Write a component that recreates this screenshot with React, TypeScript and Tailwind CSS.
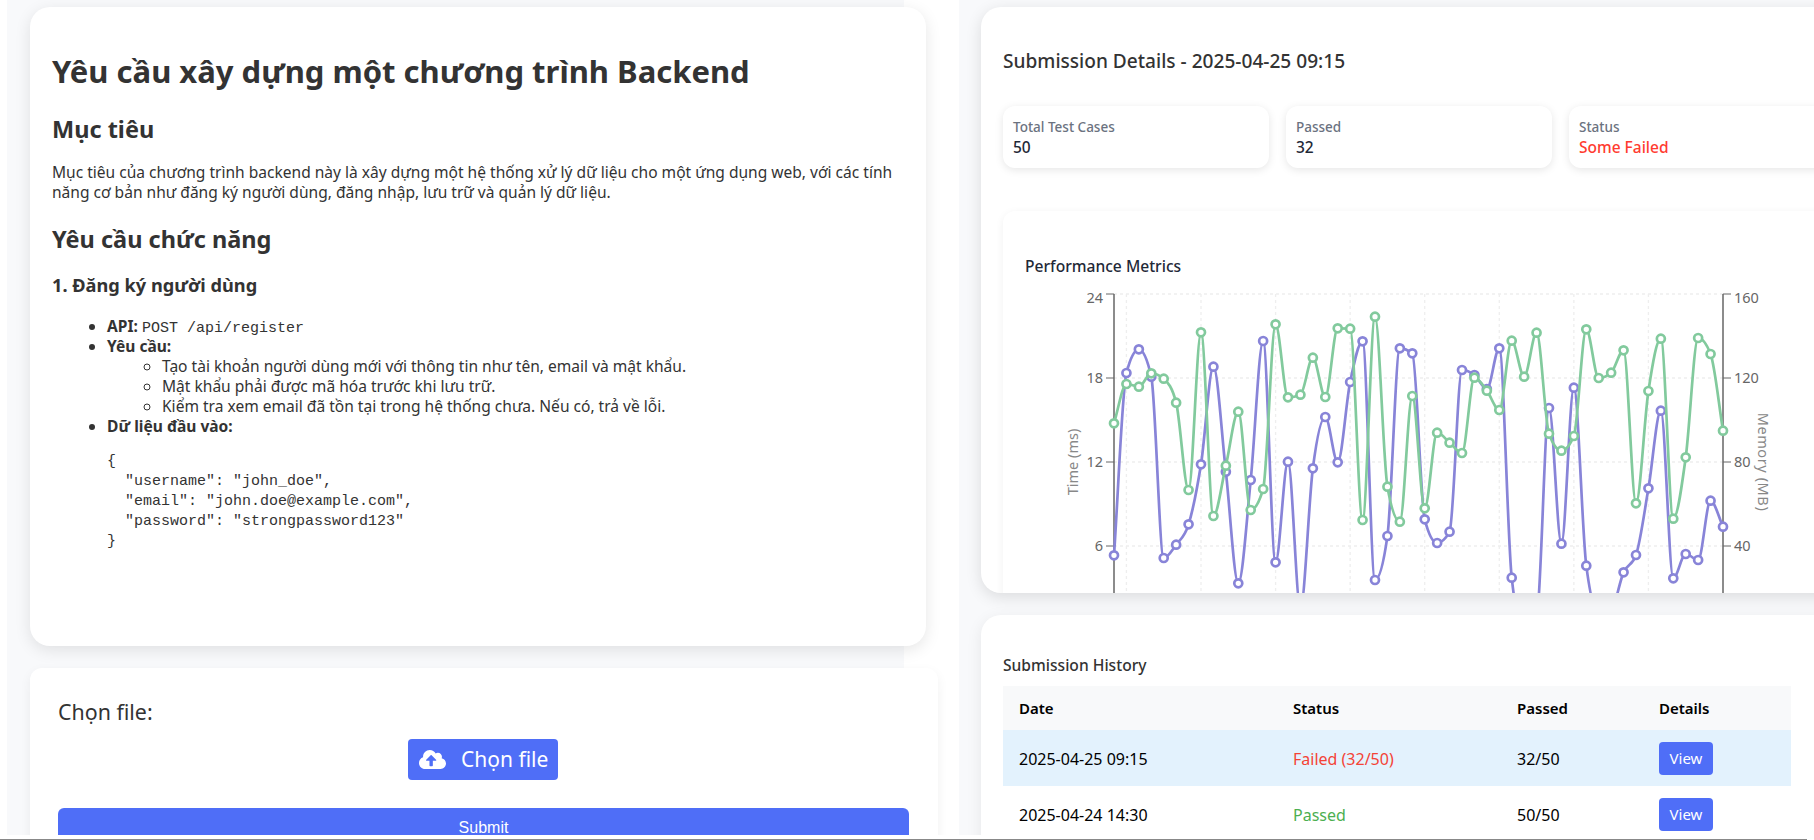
import { FaCloudUploadAlt } from "react-icons/fa";

// y positions of the chart points, measured in svg pixels x 3
const timeY = [
  826, 279, 208, 290, 834, 794, 733, 553, 260, 575, 910, 600, 183, 847, 545, 985, 565, 411, 547, 306, 184, 900, 768, 205,
  220, 718, 789, 755, 270, 285, 327, 205, 893, 1060, 1020, 384, 791, 323, 857, 1000, 990, 877, 825, 625, 392, 895, 822,
  840, 662, 740,
];
const memoryY = [
  430, 312, 320, 280, 296, 368, 630, 157, 708, 557, 395, 690, 627, 133, 352, 344, 233, 351, 145, 146, 720, 110, 620, 725,
  348, 685, 458, 488, 519, 293, 332, 390, 182, 290, 158, 461, 512, 468, 148, 294, 278, 211, 670, 333, 176, 716, 532, 174,
  222, 452,
];

const LEFT = 89;
const RIGHT = 698;
const TOP = 10;
const STEP = (RIGHT - LEFT) / 49;

function toPoints(values: number[]) {
  return values.map((v, i) => ({ x: LEFT + STEP * i, y: v / 3 - 4 }));
}

// same curve as d3 curveMonotoneX
function monotonePath(pts: { x: number; y: number }[]) {
  const n = pts.length;
  const slopes: number[] = [];
  for (let i = 0; i < n - 1; i++) slopes.push((pts[i + 1].y - pts[i].y) / (pts[i + 1].x - pts[i].x));
  const tangents = pts.map((_, i) => {
    if (i === 0) return slopes[0];
    if (i === n - 1) return slopes[n - 2];
    const a = slopes[i - 1];
    const b = slopes[i];
    if (a * b <= 0) return 0;
    return Math.sign(a) * Math.min(Math.abs(a) * 2, Math.abs(b) * 2, Math.abs((a + b) / 2));
  });
  let d = `M${pts[0].x},${pts[0].y}`;
  for (let i = 0; i < n - 1; i++) {
    const dx = (pts[i + 1].x - pts[i].x) / 3;
    d += `C${pts[i].x + dx},${pts[i].y + dx * tangents[i]} ${pts[i + 1].x - dx},${pts[i + 1].y - dx * tangents[i + 1]} ${pts[i + 1].x},${pts[i + 1].y}`;
  }
  return d;
}

function Series({ values, color }: { values: number[]; color: string }) {
  const pts = toPoints(values);
  return (
    <g>
      <path d={monotonePath(pts)} fill="none" stroke={color} strokeWidth={2.7} />
      {pts.map((p, i) => (
        <circle key={i} cx={p.x} cy={p.y} r={4} fill="#fff" stroke={color} strokeWidth={2.7} />
      ))}
    </g>
  );
}

function PerformanceChart() {
  const rows = [
    { y: TOP, left: "24", right: "160" },
    { y: TOP + 84, left: "18", right: "120" },
    { y: TOP + 168, left: "12", right: "80" },
    { y: TOP + 252, left: "6", right: "40" },
  ];
  const verticals = [1, 7, 13, 19, 25, 31, 37, 43];
  return (
    <svg width={780} height={340} className="mt-[6px] block text-[14.5px]">
      {rows.map((r) => (
        <line key={r.y} x1={LEFT} x2={RIGHT} y1={r.y} y2={r.y} stroke="#eeeeee" strokeDasharray="3 3" strokeWidth={1.3} />
      ))}
      {verticals.map((i) => (
        <line key={i} x1={LEFT + STEP * i} x2={LEFT + STEP * i} y1={TOP} y2={340} stroke="#eeeeee" strokeDasharray="3 3" strokeWidth={1.3} />
      ))}
      <line x1={LEFT} x2={LEFT} y1={TOP} y2={340} stroke="#666" strokeWidth={1.5} />
      <line x1={RIGHT} x2={RIGHT} y1={TOP} y2={340} stroke="#666" strokeWidth={1.5} />
      {rows.map((r, i) => (
        <g key={r.y} fill="#666">
          <line x1={LEFT - 8} x2={LEFT} y1={r.y} y2={r.y} stroke="#666" />
          <line x1={RIGHT} x2={RIGHT + 8} y1={r.y} y2={r.y} stroke="#666" />
          <text x={LEFT - 11} y={r.y + (i === 0 ? 9 : 5)} textAnchor="end">
            {r.left}
          </text>
          <text x={RIGHT + 11} y={r.y + (i === 0 ? 9 : 5)}>{r.right}</text>
        </g>
      ))}
      <text x={48} y={178} textAnchor="middle" fill="#888" transform="rotate(-90 48 178)" dy={5}>
        Time (ms)
      </text>
      <text x={738} y={178} textAnchor="middle" fill="#888" transform="rotate(90 738 178)" dy={5} letterSpacing={0.6}>
        Memory (MB)
      </text>
      <Series values={timeY} color="#8884d8" />
      <Series values={memoryY} color="#82ca9d" />
    </svg>
  );
}

function StatCard({ label, value, valueClass }: { label: string; value: string; valueClass: string }) {
  return (
    <div className="h-[62px] rounded-xl bg-white pl-[10px] pt-[11px] shadow-[0_2px_8px_rgba(0,0,0,0.1)]">
      <div className="text-[13.5px] leading-[20px] font-medium text-[#6b7280]">{label}</div>
      <div className={`text-[15.5px] leading-[21px] font-medium ${valueClass}`}>{value}</div>
    </div>
  );
}

const history = [
  { date: "2025-04-25 09:15", status: "Failed (32/50)", statusClass: "text-[#f44336]", passed: "32/50", rowClass: "bg-[#e3f2fd]" },
  { date: "2025-04-24 14:30", status: "Passed", statusClass: "text-[#4caf50]", passed: "50/50", rowClass: "" },
];

export default function App() {
  return (
    <div className="h-[840px] w-[1814px] overflow-hidden bg-white font-['Noto_Sans',sans-serif] text-[#333]">
      <div className="flex h-[835px] overflow-hidden">
        {/* Left column */}
        <div className="ml-[7px] h-full w-[897px] shrink-0 bg-[#f8f9fb] pl-[23px] pt-[7px]">
          <div className="h-[639px] w-[896px] rounded-[20px] bg-white pl-[22px] pt-[42px] shadow-[0_4px_16px_rgba(0,0,0,0.1)]">
            <h1 className="text-[31px] leading-[44px] font-bold">Yêu cầu xây dựng một chương trình Backend</h1>
            <h2 className="mt-[20px] text-[23.5px] leading-[32px] font-bold">Mục tiêu</h2>
            <p className="mt-[17px] w-[850px] text-[15.55px] leading-[20px]">
              Mục tiêu của chương trình backend này là xây dựng một hệ thống xử lý dữ liệu cho một ứng dụng web, với các tính
              năng cơ bản như đăng ký người dùng, đăng nhập, lưu trữ và quản lý dữ liệu.
            </p>
            <h2 className="mt-[21px] text-[23.5px] leading-[32px] font-bold">Yêu cầu chức năng</h2>
            <h3 className="mt-[18px] text-[18.2px] leading-[24px] font-bold">1. Đăng ký người dùng</h3>
            <ul className="mt-[19px] list-disc pl-[55px] text-[15.55px] leading-[20px]">
              <li>
                <strong className="font-bold">API:</strong>{" "}
                <code className="font-['Liberation_Mono',monospace] text-[15px] leading-none">POST /api/register</code>
              </li>
              <li>
                <strong className="font-bold">Yêu cầu:</strong>
                <ul className="list-[circle] pl-[55px]">
                  <li>Tạo tài khoản người dùng mới với thông tin như tên, email và mật khẩu.</li>
                  <li>Mật khẩu phải được mã hóa trước khi lưu trữ.</li>
                  <li>Kiểm tra xem email đã tồn tại trong hệ thống chưa. Nếu có, trả về lỗi.</li>
                </ul>
              </li>
              <li>
                <strong className="font-bold">Dữ liệu đầu vào:</strong>
                <pre className="mt-[16px] font-['Liberation_Mono',monospace] text-[15px] leading-[20px]">{`{
  "username": "john_doe",
  "email": "john.doe@example.com",
  "password": "strongpassword123"
}`}</pre>
              </li>
            </ul>
          </div>

          <div className="mt-[22px] h-[200px] w-[908px] rounded-xl bg-white pl-[28px] pr-[29px] pt-[30px] shadow-[0_4px_12px_rgba(0,0,0,0.06)]">
            <label className="block text-[21.4px] leading-[28px]">Chọn file:</label>
            <div className="mt-[13px] flex justify-center">
              <button className="mr-px flex h-[41px] w-[150px] items-center rounded bg-[#4f6ef7] pl-[11px] text-[21px] text-white">
                <FaCloudUploadAlt className="h-[27px] w-[27px]" />
                <span className="ml-[15px]">Chọn file</span>
              </button>
            </div>
            <button className="mt-[28px] block h-[40px] w-full rounded-md bg-[#4f6ef7] font-['Liberation_Sans',sans-serif] text-[16px] text-white">
              Submit
            </button>
          </div>
        </div>

        {/* Right column */}
        <div className="ml-[55px] min-w-0 flex-1 bg-[#f8f9fb] pl-[22px] pt-[7px]">
          <div className="h-[586px] w-[900px] overflow-hidden rounded-[20px] bg-white pl-[22px] pt-[41px] shadow-[0_4px_16px_rgba(0,0,0,0.12)]">
            <h2 className="text-[19.1px] leading-[26px] font-medium">Submission Details - 2025-04-25 09:15</h2>
            <div className="mt-[32px] grid grid-cols-[266px_266px_266px] gap-[17px]">
              <StatCard label="Total Test Cases" value="50" valueClass="text-[#1f2937]" />
              <StatCard label="Passed" value="32" valueClass="text-[#1f2937]" />
              <StatCard label="Status" value="Some Failed" valueClass="text-[#ff3b30]" />
            </div>
            <div className="mt-[43px] h-[500px] rounded-xl bg-white pl-[22px] pt-[43px] shadow-[0_2px_8px_rgba(0,0,0,0.06)]">
              <h3 className="text-[15.6px] leading-[24px] font-medium text-[#1f2937]">Performance Metrics</h3>
              <PerformanceChart />
            </div>
          </div>

          <div className="mt-[22px] h-[300px] w-[900px] rounded-[20px] bg-white pl-[22px] pt-[39px] shadow-[0_4px_16px_rgba(0,0,0,0.08)]">
            <h3 className="text-[15.6px] leading-[22px] font-medium">Submission History</h3>
            <table className="mt-[10px] w-[788px] table-fixed border-collapse text-[16px] text-black">
              <thead>
                <tr className="h-[44px] bg-[#f8f9fa] text-left text-[15px]">
                  <th className="w-[274px] pl-[16px] font-semibold">Date</th>
                  <th className="w-[224px] pl-[16px] font-semibold">Status</th>
                  <th className="w-[142px] pl-[16px] font-semibold">Passed</th>
                  <th className="pl-[16px] font-semibold">Details</th>
                </tr>
              </thead>
              <tbody>
                {history.map((row) => (
                  <tr key={row.date} className={`h-[56px] ${row.rowClass}`}>
                    <td className="pl-[16px] pt-[2px]">{row.date}</td>
                    <td className={`pl-[16px] pt-[2px] ${row.statusClass}`}>{row.status}</td>
                    <td className="pl-[16px] pt-[2px]">{row.passed}</td>
                    <td className="pl-[16px]">
                      <button className="block h-[33px] w-[54px] rounded bg-[#4f6ef7] text-[15px] text-white">View</button>
                    </td>
                  </tr>
                ))}
              </tbody>
            </table>
          </div>
        </div>
      </div>
      <div className="mt-[4px] h-px w-[1807px] bg-[#888]" />
    </div>
  );
}
